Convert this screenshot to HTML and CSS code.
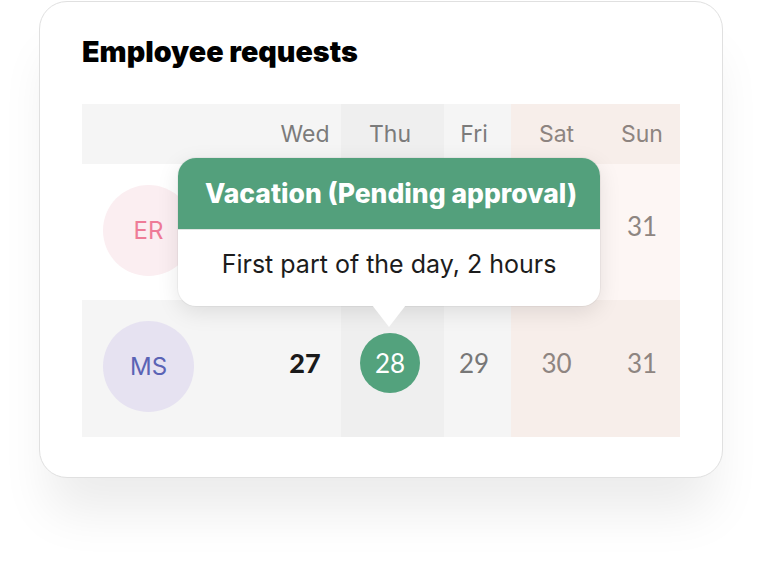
FILE: index.html
```html
<!DOCTYPE html>
<html lang="en">
<head>
<meta charset="utf-8">
<title>Employee requests</title>
<link rel="stylesheet" href="styles.css">
</head>
<body>
<div class="card">
  <h1 class="title">Employee requests</h1>
  <div class="table">
    <div class="cell c-avatar shade"></div>
    <div class="cell c-wed shade head">Wed</div>
    <div class="cell c-thu thu head">Thu</div>
    <div class="cell c-fri shade head">Fri</div>
    <div class="cell c-sat weekend head wk">Sat</div>
    <div class="cell c-sun weekend head wk">Sun</div>

    <div class="cell c-avatar light"><div class="avatar er">ER</div></div>
    <div class="cell c-wed light num">27</div>
    <div class="cell c-thu light num">28</div>
    <div class="cell c-fri light num">29</div>
    <div class="cell c-sat weekend-light num wk">30</div>
    <div class="cell c-sun weekend-light num wk">31</div>

    <div class="cell c-avatar shade"><div class="avatar ms">MS</div></div>
    <div class="cell c-wed shade num today">27</div>
    <div class="cell c-thu thu num"><span class="selected">28</span></div>
    <div class="cell c-fri shade num">29</div>
    <div class="cell c-sat weekend num wk">30</div>
    <div class="cell c-sun weekend num wk">31</div>

    <div class="tooltip">
      <div class="tooltip-head">Vacation (Pending approval)</div>
      <div class="tooltip-body">First part of the day, 2 hours</div>
      <div class="tooltip-arrow"></div>
    </div>
  </div>
</div>
</body>
</html>
```
FILE: styles.css
```css
* { box-sizing: border-box; }
html, body { margin: 0; padding: 0; background: #ffffff; }
body {
  font-family: Inter, "Noto Sans", sans-serif;
  width: 759px;
  height: 577px;
  overflow: hidden;
}
.card {
  margin: 1px 0 0 39px;
  width: 684px;
  height: 477px;
  border: 1px solid #e0e0e0;
  border-radius: 28px;
  background: #ffffff;
  padding: 34px 42px 0 42px;
  box-shadow: 0 44px 50px -10px rgba(0, 0, 0, 0.08);
}
.title {
  margin: 0;
  font-family: Inter, sans-serif;
  font-weight: 900;
  font-size: 28.7px;
  line-height: 32px;
  color: #000;
  letter-spacing: 0;
}
.table {
  position: relative;
  margin-top: 36px;
  display: grid;
  grid-template-columns: 187px 72px 103px 67px 85px 84px;
  grid-template-rows: 60px 136px 137px;
}
.cell {
  display: flex;
  align-items: center;
  justify-content: center;
}
.shade { background: #f5f5f5; }
.thu { background: #efefef; }
.light { background: #ffffff; }
.weekend { background: #f7eeea; }
.weekend-light { background: #fdf6f4; }
.head {
  font-size: 23px;
  color: #7b7b7b;
  font-weight: 400;
}
.head.wk { color: #8d8480; }
.num {
  font-family: Lato, sans-serif;
  font-size: 26px;
  color: #777;
  padding-bottom: 12px;
}
.num.wk { color: #8e8581; }
.c-thu { padding-right: 5px; }
.c-fri { padding-right: 7px; }
.c-sat { padding-left: 6px; }
.c-sun { padding-left: 8px; }
.c-avatar { justify-content: flex-start; padding-left: 21px; padding-bottom: 4px; }
.today { font-weight: 900; color: #1a1a1a; font-size: 27px; }
.avatar {
  width: 91px;
  height: 91px;
  border-radius: 50%;
  display: flex;
  align-items: center;
  justify-content: center;
  font-size: 24px;
  font-weight: 400;
}
.er { background: #fbeef1; color: #ee7b97; }
.ms { background: #e6e2f1; color: #5a63b5; }
.selected {
  width: 60px;
  height: 60px;
  border-radius: 50%;
  background: #53a27d;
  color: #ffffff;
  display: flex;
  align-items: center;
  justify-content: center;
  font-size: 26px;
}
.tooltip {
  position: absolute;
  left: 96px;
  top: 54px;
  width: 422px;
  border-radius: 18px;
  background: #ffffff;
  box-shadow: 0 6px 22px rgba(0, 0, 0, 0.10), 0 0 0 1px rgba(0, 0, 0, 0.04);
}
.tooltip-head {
  height: 72px;
  background: #53a07c;
  border-radius: 18px 18px 0 0;
  color: #ffffff;
  font-weight: 800;
  font-size: 26.5px;
  display: flex;
  align-items: center;
  justify-content: center;
  padding-left: 4px;
  padding-bottom: 2px;
  border-bottom: 1px solid #dfe5e2;
}
.tooltip-body {
  height: 76px;
  display: flex;
  align-items: center;
  justify-content: center;
  font-size: 25px;
  color: #1c1c1c;
  padding-bottom: 8px;
}
.tooltip-arrow {
  position: absolute;
  left: 194px;
  top: 147px;
  width: 0;
  height: 0;
  border-left: 17px solid transparent;
  border-right: 17px solid transparent;
  border-top: 22px solid #ffffff;
}
```
